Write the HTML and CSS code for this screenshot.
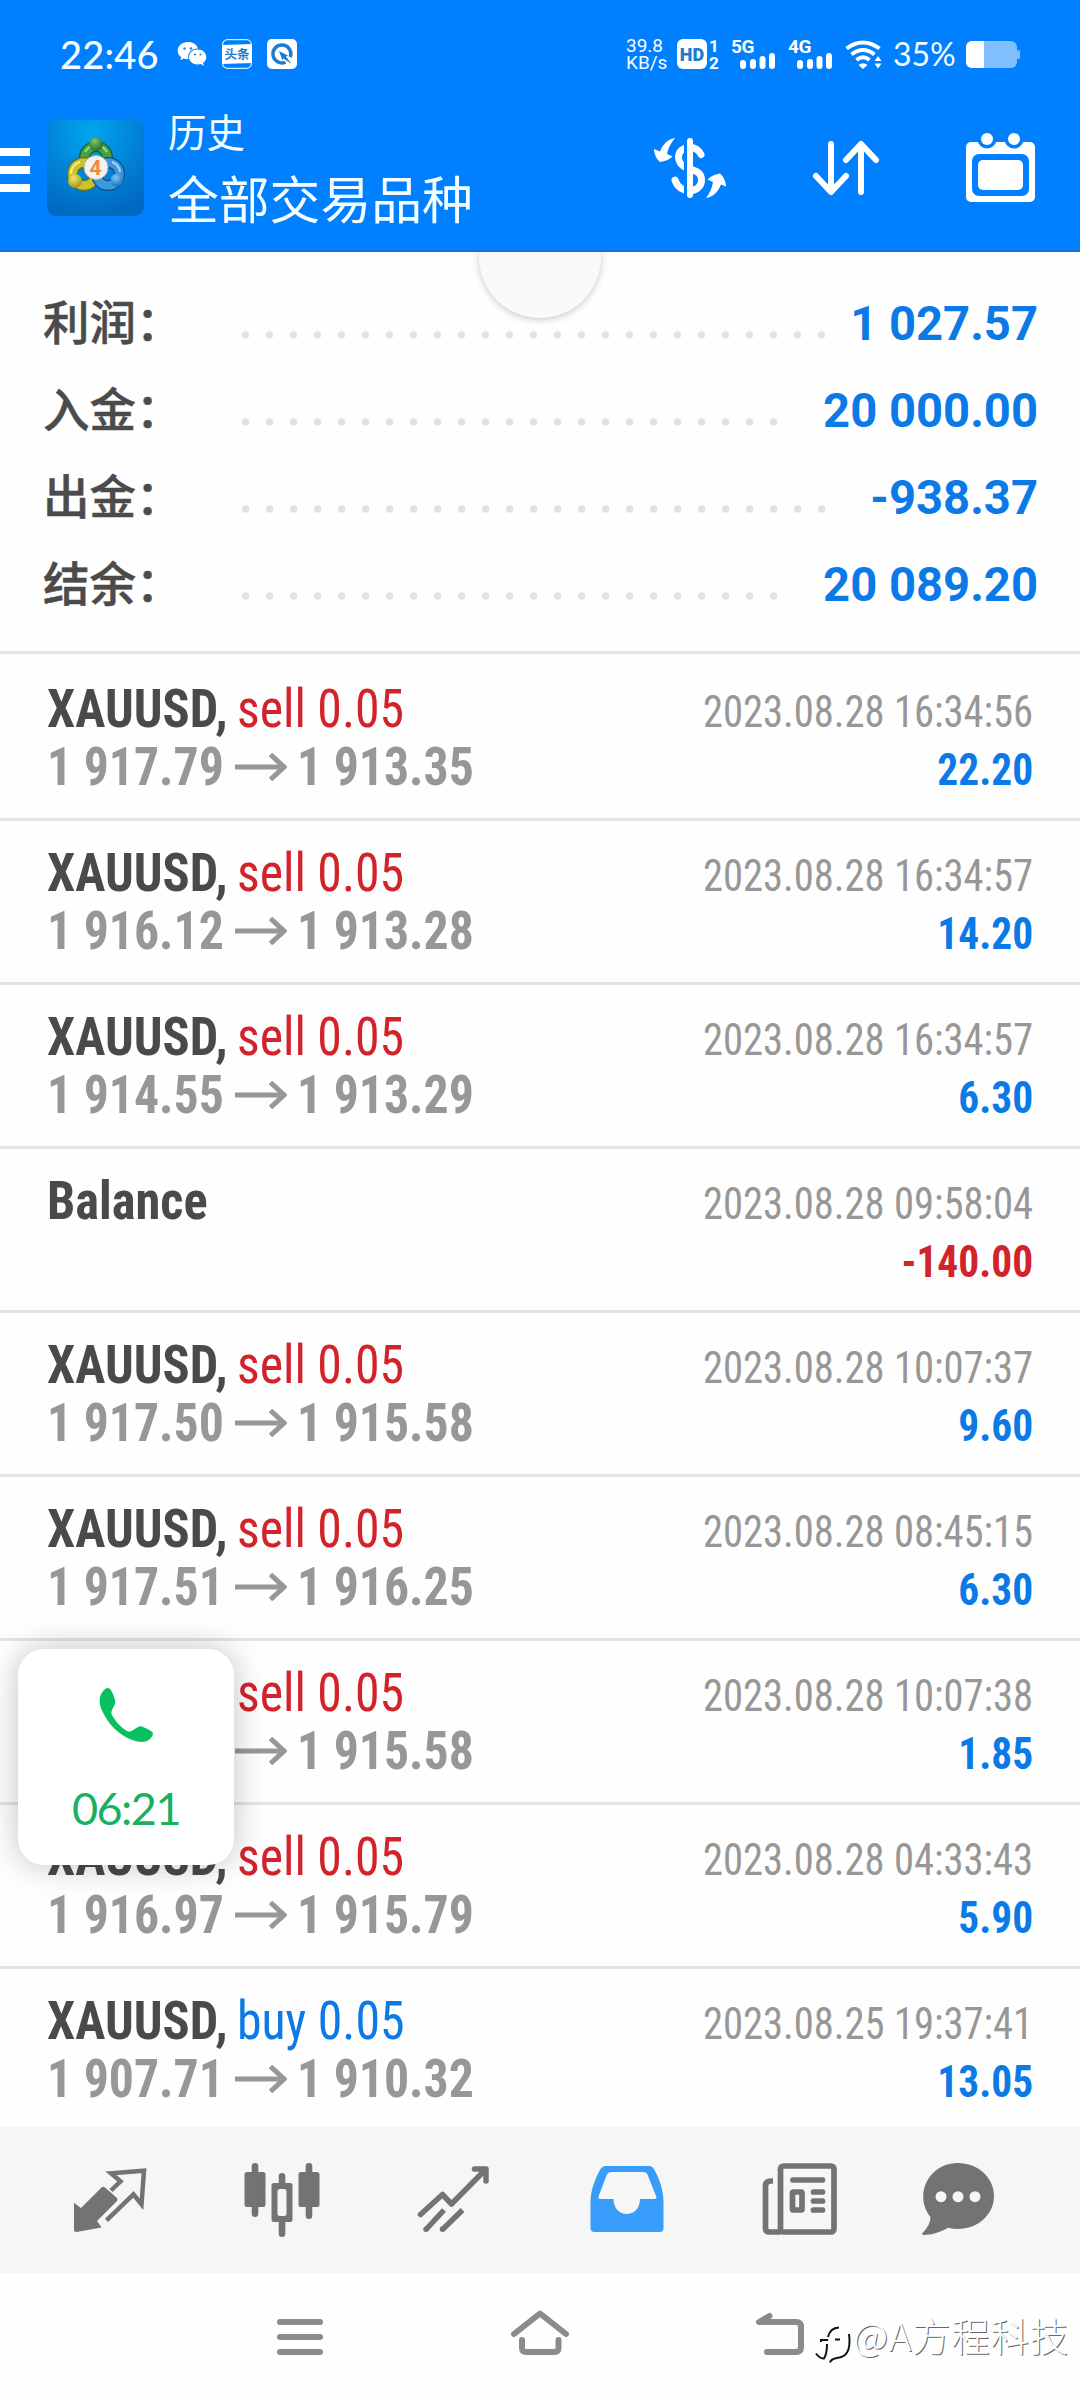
FILE: index.html
```html
<!DOCTYPE html>
<html lang="zh-CN">
<head>
<meta charset="utf-8">
<title>历史</title>
<link rel="stylesheet" href="styles.css">
</head>
<body>
<div class="screen">
  <header class="header">
    <div class="status">
      <span class="clock">22:46</span>
      <svg class="st-wechat" width="30" height="30" viewBox="177 39 30 30">
        <path fill="#fff" d="M188 42c-6 0-10.300 4-10.300 8.700 0 2.700 1.400 5 3.600 6.600l-1 3 3.500-1.800c1.500.4 2.700.7 4.600.6-1.500-6 3-10.500 9.500-10.500C197 44.500 193 42 188 42z"/>
        <path fill="#fff" d="M197.700 49.500c-5 0-8.700 3.400-8.700 7.600s3.700 7.500 8.700 7.500c1.100 0 2.200-.2 3.200-.5l3 1.900-.8-2.900c2-1.500 3.200-3.600 3.200-6 0-4.200-3.600-7.600-8.600-7.600z"/>
        <g fill="#2585dc"><circle cx="184.500" cy="48.500" r="1.300"/><circle cx="191" cy="48.500" r="1.300"/><circle cx="195" cy="54.500" r="1.100"/><circle cx="200.500" cy="54.500" r="1.100"/></g>
      </svg>
      <svg class="st-news" width="30" height="30" viewBox="0 0 30 30">
        <rect x=".6" y=".6" width="28.800" height="28.800" rx="5" fill="none" stroke="#cfeaff" stroke-width="1.200"/>
        <path fill="#fff" d="M0 6l30-1v19L0 25z"/>
        <text x="15" y="20" text-anchor="middle" class="st-news-text">头条</text>
      </svg>
      <svg class="st-q" width="30" height="30" viewBox="0 0 30 30">
        <rect width="30" height="30" rx="5" fill="#fff"/>
        <path d="M18.500 23.200a9 9 0 1 1 4.800-5" fill="none" stroke="#1c7bcf" stroke-width="3.400"/>
        <path d="M12 12l9 4.500-2 1 5.500 7.500-8-5.500-1 2z" fill="#1c7bcf"/>
      </svg>
      <div class="st-speed"><span>39.8</span><span>KB/s</span></div>
      <svg class="st-hd" width="43" height="42" viewBox="677 33 43 42">
        <rect x="677" y="39" width="30" height="30" rx="6" fill="#fff"/>
        <text x="692" y="60.500" text-anchor="middle" class="st-hd-text">HD</text>
        <text x="714" y="52" text-anchor="middle" class="st-sim">1</text>
        <text x="714" y="69" text-anchor="middle" class="st-sim">2</text>
      </svg>
      <svg class="st-5g" width="45" height="42" viewBox="731 33 45 42">
        <text x="731" y="53" class="st-net">5G</text>
        <path stroke="#fff" stroke-width="6" stroke-linecap="round" d="M743 63v3M753 62v4M762.500 59v7M772 56v10"/>
      </svg>
      <svg class="st-4g" width="45" height="42" viewBox="788 33 45 42">
        <text x="788" y="53" class="st-net">4G</text>
        <path stroke="#fff" stroke-width="6" stroke-linecap="round" d="M800 63v3M810 62v4M819.500 59v7M829 56v10"/>
      </svg>
      <svg class="st-wifi" width="38" height="30" viewBox="845 39 38 30">
        <g fill="none" stroke="#fff" stroke-width="4"><path d="M846.500 48.500q16.500-12 33 0"/><path d="M851.500 54.500q11.500-9 23 0"/><path d="M856.500 60q6.500-5.500 13 0"/></g>
        <path fill="#fff" d="M858.500 65q4.500-3.500 9 0l-4.500 4z"/>
        <path fill="#fff" d="M878 56l3.500 5h-7zM878 68.500l3.500-5h-7z"/>
      </svg>
      <span class="st-pct">35%</span>
      <svg class="st-batt" width="54" height="27" viewBox="0 0 54 27">
        <rect width="51" height="27" rx="6" fill="#80bfff"/>
        <rect x="51" y="9" width="3" height="9" rx="1.500" fill="#80bfff"/>
        <path fill="#fff" d="M6 0h12v27H6a6 6 0 0 1-6-6V6a6 6 0 0 1 6-6z"/>
      </svg>
    </div>
    <div class="toolbar">
      <div class="burger"><i></i><i></i><i></i></div>
      <svg class="app" width="97" height="96" viewBox="0 0 97 96">
        <defs>
          <radialGradient id="bg" cx=".45" cy=".12" r=".9"><stop offset="0" stop-color="#00a6ee"/><stop offset=".55" stop-color="#0082d6"/><stop offset="1" stop-color="#0068bf"/></radialGradient>
          <radialGradient id="gg" cx=".4" cy=".3" r=".8"><stop offset="0" stop-color="#7cc47c"/><stop offset="1" stop-color="#14661e"/></radialGradient>
          <radialGradient id="gy" cx=".4" cy=".3" r=".8"><stop offset="0" stop-color="#f2e86a"/><stop offset="1" stop-color="#9a8a10"/></radialGradient>
          <radialGradient id="gb" cx=".4" cy=".3" r=".8"><stop offset="0" stop-color="#7cc8f6"/><stop offset="1" stop-color="#0f62b4"/></radialGradient>
        </defs>
        <rect width="97" height="96" rx="9" fill="url(#bg)"/>
        <g fill="none">
          <circle cx="49" cy="38" r="11.500" stroke="#14602a" stroke-width="11"/><circle cx="49" cy="38" r="11.500" stroke="#46a244" stroke-width="8.500"/><path d="M38 32a12.500 12.500 0 0 1 22 0" stroke="#9bdc8c" stroke-width="2"/>
          <circle cx="37" cy="54" r="11.500" stroke="#6d6a12" stroke-width="11"/><circle cx="37" cy="54" r="11.500" stroke="#c9c22f" stroke-width="8.500"/><path d="M24 54a12 12 0 0 1 9-12" stroke="#f3f08c" stroke-width="2"/>
          <circle cx="61" cy="54" r="11.500" stroke="#0c4d8e" stroke-width="11"/><circle cx="61" cy="54" r="11.500" stroke="#3c98da" stroke-width="8.500"/><path d="M65 42a12 12 0 0 1 8 10" stroke="#a5daf8" stroke-width="2"/>
        </g>
        <circle cx="49" cy="24" r="7" fill="url(#gg)"/><circle cx="28" cy="61" r="7" fill="url(#gy)"/><circle cx="70" cy="60" r="6.500" fill="url(#gb)"/>
        <circle cx="49" cy="47.500" r="12" fill="#f4f0ee" stroke="#b9b6ae" stroke-width="1"/>
        <text x="48.500" y="55" text-anchor="middle" class="app-four">4</text>
      </svg>
      <div class="titles"><div class="t1">历史</div><div class="t2">全部交易品种</div></div>
      <svg class="i-dollar" width="74" height="62" viewBox="653 137 74 62">
        <path fill="none" stroke="#fff" stroke-width="7" stroke-linecap="round" d="M701 154.500C698.500 149.500 695 147.500 690 147.500c-14 0-15.500 16-3 20.500 8 3 14.500 3.500 14.500 12 0 13.500-22 15-26.500 0"/>
        <path fill="#007fff" d="M684 137h5v62h-5z"/>
        <path stroke="#fff" stroke-width="6" stroke-linecap="round" d="M690 141v54"/>
        <path fill="#fff" d="M675 138c-7 1-12 6-15 13.500l-6-2.500c0 5 3 11 6 13 5-1 9-2 12.500-5.500l-5.500-2.500c1-6 4-11 8-16zM706 198c7-1 12-6 15-13.500l5 2c0-5-3-11-6-13-5 1-9 2.500-12.500 6l5.500 2.500c-1 6-3 11-7 16z"/>
      </svg>
      <svg class="i-sort" width="68" height="56" viewBox="812 140 68 56">
        <path fill="none" stroke="#fff" stroke-width="6" stroke-linecap="round" stroke-linejoin="round" d="M831 144v47M816 176l15 16 15-16M861 192v-47M846 160l15-16 15 16"/>
      </svg>
      <svg class="i-cal" width="69" height="70" viewBox="966 132 69 70">
        <rect x="966" y="141" width="69" height="60" rx="5" fill="#fff"/>
        <circle cx="987" cy="138" r="9.500" fill="#007fff"/><circle cx="1014" cy="138" r="9.500" fill="#007fff"/>
        <circle cx="987" cy="138" r="6" fill="#fff"/><circle cx="1014" cy="138" r="6" fill="#fff"/>
        <rect x="972" y="153" width="57" height="42" rx="7" fill="#007fff"/><rect x="978" y="159" width="45" height="30" rx="5" fill="#fff"/>
      </svg>
    </div>
  </header>

  <main class="content">
    <div class="pull"></div>
    <section class="summary">
      <div class="sum"><span class="label">利润：</span><span class="dots"></span><span class="val">1 027.57</span></div>
      <div class="sum"><span class="label">入金：</span><span class="dots dots-short"></span><span class="val">20 000.00</span></div>
      <div class="sum"><span class="label">出金：</span><span class="dots"></span><span class="val">-938.37</span></div>
      <div class="sum"><span class="label">结余：</span><span class="dots dots-short"></span><span class="val">20 089.20</span></div>
    </section>
    <svg class="defs"><symbol id="arrow" viewBox="0 0 52 28"><path d="M0 14h48M35.500 1.500L49 14 35.500 26.500" fill="none" stroke="#979797" stroke-width="5"/></symbol></svg>
    <section class="list">
      <div class="row"><div class="left"><div class="deal"><b>XAUUSD,</b><span class="sell">sell 0.05</span></div><div class="price"><span>1 917.79</span><svg><use href="#arrow"/></svg><span>1 913.35</span></div></div><div class="right"><div class="date">2023.08.28 16:34:56</div><div class="amt">22.20</div></div></div>
      <div class="row"><div class="left"><div class="deal"><b>XAUUSD,</b><span class="sell">sell 0.05</span></div><div class="price"><span>1 916.12</span><svg><use href="#arrow"/></svg><span>1 913.28</span></div></div><div class="right"><div class="date">2023.08.28 16:34:57</div><div class="amt">14.20</div></div></div>
      <div class="row"><div class="left"><div class="deal"><b>XAUUSD,</b><span class="sell">sell 0.05</span></div><div class="price"><span>1 914.55</span><svg><use href="#arrow"/></svg><span>1 913.29</span></div></div><div class="right"><div class="date">2023.08.28 16:34:57</div><div class="amt">6.30</div></div></div>
      <div class="row"><div class="left"><div class="deal"><b>Balance</b></div></div><div class="right"><div class="date">2023.08.28 09:58:04</div><div class="amt neg">-140.00</div></div></div>
      <div class="row"><div class="left"><div class="deal"><b>XAUUSD,</b><span class="sell">sell 0.05</span></div><div class="price"><span>1 917.50</span><svg><use href="#arrow"/></svg><span>1 915.58</span></div></div><div class="right"><div class="date">2023.08.28 10:07:37</div><div class="amt">9.60</div></div></div>
      <div class="row"><div class="left"><div class="deal"><b>XAUUSD,</b><span class="sell">sell 0.05</span></div><div class="price"><span>1 917.51</span><svg><use href="#arrow"/></svg><span>1 916.25</span></div></div><div class="right"><div class="date">2023.08.28 08:45:15</div><div class="amt">6.30</div></div></div>
      <div class="row"><div class="left"><div class="deal"><b></b><span class="sell">sell 0.05</span></div><div class="price"><span></span><svg><use href="#arrow"/></svg><span>1 915.58</span></div></div><div class="right"><div class="date">2023.08.28 10:07:38</div><div class="amt">1.85</div></div></div>
      <div class="row"><div class="left"><div class="deal"><b>XAUUSD,</b><span class="sell">sell 0.05</span></div><div class="price"><span>1 916.97</span><svg><use href="#arrow"/></svg><span>1 915.79</span></div></div><div class="right"><div class="date">2023.08.28 04:33:43</div><div class="amt">5.90</div></div></div>
      <div class="row"><div class="left"><div class="deal"><b>XAUUSD,</b><span class="buy">buy 0.05</span></div><div class="price"><span>1 907.71</span><svg><use href="#arrow"/></svg><span>1 910.32</span></div></div><div class="right"><div class="date">2023.08.25 19:37:41</div><div class="amt">13.05</div></div></div>
    </section>
  </main>

  <nav class="tabs">
    <svg class="tab1" width="74" height="76" viewBox="73 2162 74 76"><path fill="#737373" d="M74 2202.700l7 5.300 20.500-20.500q1.800-1.500 3.600 0L117 2198q1 1.500 0 3l-20 20 4.600 6.500-25 4.500q-2.600 0-2.600-2z"/><path fill="none" stroke="#737373" stroke-width="4.500" d="M111 2190.500l9.500-9.200-9.500-8 33-2.500-2.500 33.500-8-10-27 26"/></svg>
    <svg class="tab2" width="76" height="76" viewBox="243.500 2162 76 76"><g fill="#737373"><rect x="244" y="2172" width="21" height="35" rx="2.500"/><rect x="298" y="2172" width="21" height="35" rx="2.500"/><rect x="251.200" y="2163" width="6.600" height="54" rx="3.300"/><rect x="305.200" y="2163" width="6.600" height="56" rx="3.300"/><rect x="278.200" y="2173" width="6.600" height="64" rx="3.300"/><rect x="271" y="2183" width="21" height="39" rx="2.500"/></g><rect x="277" y="2189" width="9" height="27" rx="2.500" fill="#f6f6f6"/></svg>
    <svg class="tab3" width="76" height="76" viewBox="416 2162 76 76"><g fill="none" stroke="#737373" stroke-width="5.500"><path stroke-linecap="round" stroke-linejoin="round" d="M420.500 2214.500l22-20 9 9.500 34-34.500M474.500 2169H486v12"/><path d="M426 2229.500l18-19.500M442.500 2229.500l20-19.500"/></g><g fill="#737373"><circle cx="426" cy="2229.300" r="2.750"/><circle cx="442.500" cy="2229.300" r="2.750"/></g></svg>
    <svg class="tab4" width="76" height="76" viewBox="588.500 2162 76 76"><path fill="#389cfa" fill-rule="evenodd" d="M590 2202c0-12 5-24 9.500-32q2-4 6-4h43q3.500 0 5.500 4c4.500 8 9 20 9 32v26q0 4-4 4h-65q-4 0-4-4zM611 2172q-3.500 0-4.800 3l-8.200 21.500q-.5 2.500 1.500 2.500H613c0 20 26.500 20 26.500 0h14.700q2.300 0 1.500-2.500l-8.500-21.500q-1.200-3-4.700-3z"/></svg>
    <svg class="tab5" width="76" height="76" viewBox="762 2162 76 76"><g fill="none" stroke="#737373" stroke-width="5.700"><rect x="780.500" y="2166" width="53.500" height="66" rx="3"/><path d="M773 2181h-2q-5.500 0-5.500 5v42q0 4 4 4h11"/><rect x="792.500" y="2192" width="9.500" height="18" rx="1"/><path stroke-linecap="round" d="M793 2180h29.500M813.500 2192h9M813.500 2201h9M813.500 2210h9"/></g></svg>
    <svg class="tab6" width="76" height="76" viewBox="920 2162 76 76"><path fill="#737373" d="M930.500 2217C913 2195 929 2163 958 2163c20 0 36 14.500 36 33s-16 33-36 33q-5 0-10-1.200c-8 4.700-16 7.200-25 7.200q-1.500-.5-.5-2 8-8 8-16z"/><g fill="#f6f6f6"><circle cx="941" cy="2196.700" r="5.500"/><circle cx="958" cy="2196.700" r="5.500"/><circle cx="975" cy="2196.700" r="5.500"/></g></svg>
  </nav>

  <div class="sysnav">
    <svg class="sys1" width="46" height="50" viewBox="277 2310 46 50"><path stroke="#8b8b8b" stroke-width="6" stroke-linecap="round" d="M280 2322h40M280 2337h40M280 2352h40"/></svg>
    <svg class="sys2" width="58" height="50" viewBox="511 2310 58 50"><path fill="none" stroke="#8b8b8b" stroke-width="6" stroke-linecap="round" stroke-linejoin="round" d="M514 2334l26-20.500 26 20.500M522 2340v8q0 4 4 4h28q4.500 0 4.500-4v-8"/></svg>
    <svg class="sys3" width="50" height="50" viewBox="755 2310 50 50"><path fill="none" stroke="#8b8b8b" stroke-width="6" stroke-linecap="round" stroke-linejoin="round" d="M769.500 2316l-10.500 6h37q5 0 5 5v20q0 5-5 5h-29"/></svg>
  </div>
  <div class="mark">
    <svg width="38" height="40" viewBox="814 2325 38 40"><g fill="none" stroke="#111" stroke-width="2"><path d="M828 2337q2-9 11-9.500"/><path d="M821 2342v-2h7M827 2344q0 10-3 14.500-4 .500-8-5"/><path d="M849 2334q2 16-4 21-4 3-8 3-6 1-7 4.500"/><path d="M835 2339.500h5"/></g></svg>
    <span>@A方程科技</span>
  </div>
  <div class="call">
    <svg width="56" height="56" viewBox="98 1687 56 56"><path fill="#07c160" d="M107.500 1688q-2 0-4 2.500c-5 6-5 12.500-1 21 6 13 16 23 28.500 28 8 3.500 15 3.500 19.500-1q2.500-2.500 2.500-5.500-1-2.500-11-6.500-2-.5-4 .5l-6.500 4q-2.500 1-4.500 0c-6.500-4-12-10-15.500-17q-.5-2 .5-4l3-6q.5-2 0-4-3-9.500-5-11-1-1-2.500-1z"/></svg>
    <span>06:21</span>
  </div>
</div>
</body>
</html>
```
FILE: styles.css
```css
* { box-sizing: border-box; }
body { margin: 0; background: #fff; font-family: Roboto, "Noto Sans CJK SC", sans-serif; }
svg { display: block; flex: none; }
.screen { position: relative; display: flex; flex-direction: column; width: 1080px; height: 2400px; overflow: hidden; background: #fefefe; }

.header { flex: none; height: 252px; background: #007fff; border-bottom: 2px solid #1a70d8; color: #f4fdff; position: relative; z-index: 1; }
.status { display: flex; align-items: center; height: 108px; padding-left: 60px; white-space: nowrap; }
.clock { width: 117px; font: 500 38px/54px Lato, sans-serif; letter-spacing: .2px; }
.st-news { margin-left: 15px; }
.st-news-text { font: 700 12.5px "Noto Sans CJK SC", sans-serif; fill: #1c7bcf; }
.st-q { margin-left: 15px; }
.st-speed { display: flex; flex-direction: column; width: 51px; margin-left: 329px; font: 400 19px/17.500px Roboto, sans-serif; }
.st-hd { margin-left: 0; }
.st-hd-text { font: 900 18px Roboto, sans-serif; fill: #1c7bcf; }
.st-sim { font: 700 17px Roboto, sans-serif; fill: #fff; }
.st-net { font: 700 19px Roboto, sans-serif; fill: #fff; letter-spacing: -.5px; }
.st-5g { margin-left: 11px; }
.st-4g { margin-left: 12px; }
.st-wifi { margin-left: 12px; }
.st-pct { width: 73px; padding-left: 10px; font: 32px/44px Lato, sans-serif; }
.st-batt { margin-left: 10px; }

.toolbar { display: flex; align-items: center; height: 120px; }
.burger { display: flex; flex-direction: column; gap: 10px; width: 30px; margin-top: 4px; }
.burger i { height: 8px; background: #fff; }
.app { margin-left: 17px; }
.app-four { font: 700 21px Roboto, sans-serif; fill: #ef8a3c; }
.titles { align-self: flex-start; width: 484px; margin: -1px 1px 0 24px; font-family: "Noto Sans CJK SC", sans-serif; white-space: nowrap; }
.t1 { font-size: 38.5px; line-height: 46px; }
.t2 { font-size: 50.8px; line-height: 88px; }
.i-sort { margin-left: 85px; }
.i-cal { margin-left: 86px; }

.content { position: relative; flex: none; height: 1875px; overflow: hidden; }
.pull { position: absolute; left: 479px; top: -56px; width: 122px; height: 122px; border-radius: 50%; background: #fafafa; box-shadow: 0 2px 7px rgba(0,0,0,.2); }
.summary { position: relative; height: 402px; padding: 27px 42px 0 43px; border-bottom: 3px solid #e3e3e3; }
.sum { display: flex; align-items: center; height: 87px; }
.label { width: 191px; margin-top: -6px; font: 500 46.500px/80px "Noto Sans CJK SC", sans-serif; color: #4b4b4b; -webkit-text-stroke: .5px #4b4b4b; white-space: nowrap; }
.dots { flex: none; width: 600px; height: 8px; margin: 25px 0 0; background: radial-gradient(circle at 11.500px 4px, #e2e2e2 3.2px, transparent 4.2px) 0 0 / 24px 8px repeat-x; }
.dots-short { width: 552px; }
.val { margin-left: auto; font: 700 47.200px/88px Roboto, sans-serif; color: #0c7ae6; white-space: nowrap; position: relative; top: 1px; }

.defs { position: absolute; width: 0; height: 0; }
.list { padding-top: 3px; font-family: "Roboto Condensed", Roboto, sans-serif; }
.row { display: flex; justify-content: space-between; height: 164px; padding: 0 47px 0 47px; border-bottom: 3px solid #e3e3e3; font-size: 54px; line-height: 58px; white-space: nowrap; }
.left { padding-top: 23px; color: #979797; }
.deal { display: flex; height: 58px; }
.left b, .left span { transform: scaleX(.922); transform-origin: left; }
.left b { width: 190px; color: #4a4a4a; transform: scaleX(.934); }
.left .sell { color: #d2232a; }
.left .buy { color: #0c7ae6; }
.price { display: flex; align-items: center; height: 58px; font-weight: 700; }
.price span { width: 188px; }
.price svg { width: 52px; height: 28px; margin-right: 10px; }
.right { padding-top: 26px; font-size: 45px; text-align: right; }
.date { color: #979797; transform: scaleX(.902); transform-origin: right; }
.amt { font-weight: 700; color: #0c7ae6; transform: scaleX(.92); transform-origin: right; }
.neg { color: #d2232a; }

.tabs { flex: none; display: flex; align-items: center; height: 146px; padding-left: 73px; background: #f6f6f6; }
.tab2 { margin-left: 96.5px; }
.tab3 { margin-left: 96.5px; }
.tab4 { margin-left: 96.5px; }
.tab5 { margin-left: 97.5px; }
.tab6 { margin-left: 82px; }
.sysnav { display: flex; padding: 37px 0 0 277px; }
.sys2 { margin-left: 188px; }
.sys3 { margin-left: 186px; }

.mark { position: absolute; left: 814px; top: 2325px; display: flex; align-items: center; height: 40px; font: 300 38.500px/40px "Noto Sans CJK SC", sans-serif; letter-spacing: .7px; color: #fff; text-shadow: 1px 1px 0 #666; white-space: nowrap; }
.mark span { margin: 0 0 22px 1px; }
.call { position: absolute; left: 18px; top: 1649px; display: flex; flex-direction: column; align-items: center; width: 216px; height: 216px; padding-top: 38px; border-radius: 26px; background: #fff; box-shadow: 0 0 32px rgba(0,0,0,.24); font: 45px/54px Lato, sans-serif; letter-spacing: -1.500px; color: #19b062; }
.call span { margin-top: 38px; }
```
